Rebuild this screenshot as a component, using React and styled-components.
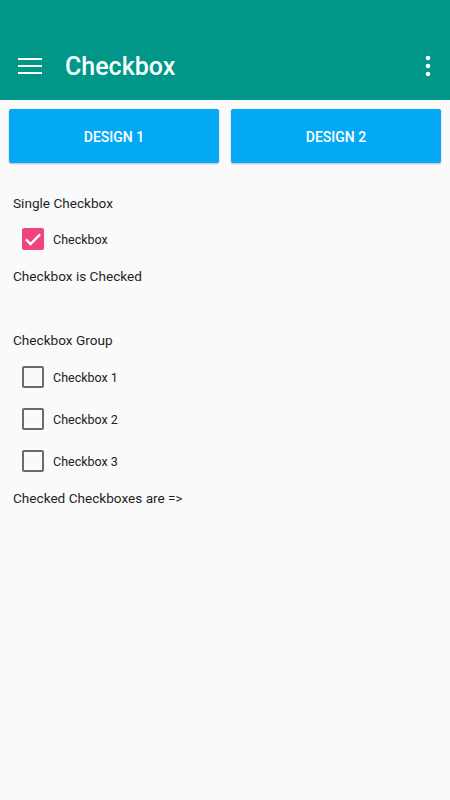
import React, { useState } from "react";
import styled, { createGlobalStyle } from "styled-components";

const Global = createGlobalStyle`
  html, body { margin: 0; padding: 0; background: #fafafa; }
  body { font-family: Roboto, "Noto Sans", Arial, sans-serif; }
  * { box-sizing: border-box; }
`;

const Page = styled.div`
  width: 450px;
  min-height: 800px;
  background: #fafafa;
`;

const AppBar = styled.header`
  height: 100px;
  background: #009688;
  padding-top: 31px;
`;

const Toolbar = styled.div`
  height: 70px;
  display: flex;
  align-items: center;
  padding: 0 18px;
  color: #fff;
`;

const Title = styled.h1`
  margin: 0 0 0 23px;
  flex: 1;
  font-size: 25px;
  font-weight: 500;
  color: #f4fffd;
  letter-spacing: 0;
`;

const IconButton = styled.button`
  background: none;
  border: 0;
  padding: 0;
  display: flex;
  align-items: center;
  justify-content: center;
  color: #fff;
  cursor: pointer;
`;

const ButtonRow = styled.div`
  display: grid;
  grid-template-columns: 1fr 1fr;
  gap: 12px;
  padding: 9px 9px 0;
`;

const RaisedButton = styled.button`
  height: 54px;
  border: 0;
  border-radius: 2px;
  background: #03a9f4;
  color: #fff;
  font-family: Roboto, Arial, sans-serif;
  font-size: 14px;
  font-weight: 500;
  letter-spacing: 0;
  padding-top: 2px;
  box-shadow: 0 1px 2px rgba(0, 0, 0, 0.25);
  cursor: pointer;
`;

const Content = styled.main`
  padding: 0 13px;
  display: flex;
  flex-direction: column;
`;

const Text = styled.div`
  height: 20px;
  line-height: 20px;
  font-size: 13.6px;
  color: #1f1f1f;
  margin-top: ${(p) => p.$top || 0}px;
`;

const Row = styled.label`
  height: 42px;
  display: flex;
  align-items: center;
  padding-left: 9px;
  gap: 9px;
  margin-top: ${(p) => p.$top || 0}px;
  cursor: pointer;
`;

const Box = styled.span`
  width: 22px;
  height: 22px;
  border-radius: 2px;
  display: flex;
  align-items: center;
  justify-content: center;
  background: ${(p) => (p.$checked ? "#f04480" : "transparent")};
  border: ${(p) => (p.$checked ? "none" : "2px solid #6b6b6b")};
`;

const Label = styled.span`
  font-size: 12.5px;
  color: #222;
`;

function Checkbox({ checked, onChange, label, top }) {
  return (
    <Row $top={top} onClick={onChange}>
      <Box $checked={checked}>
        {checked && (
          <svg width="20" height="20" viewBox="0 0 24 24">
            <path d="M3.5 12.5l5.5 5.5L20.5 6.5" fill="none" stroke="#fff" strokeWidth="2.8" />
          </svg>
        )}
      </Box>
      <Label>{label}</Label>
    </Row>
  );
}

export default function App() {
  const [single, setSingle] = useState(true);
  const [group, setGroup] = useState([false, false, false]);
  const toggle = (i) => setGroup((g) => g.map((v, j) => (j === i ? !v : v)));
  const checkedList = group
    .map((v, i) => (v ? `Checkbox ${i + 1}` : null))
    .filter(Boolean)
    .join(", ");

  return (
    <Page>
      <Global />
      <AppBar>
        <Toolbar>
          <IconButton aria-label="menu">
            <svg width="24" height="18" viewBox="0 0 24 18">
              <rect x="0" y="1" width="24" height="2" fill="#fff" />
              <rect x="0" y="8" width="24" height="2" fill="#fff" />
              <rect x="0" y="15" width="24" height="2" fill="#fff" />
            </svg>
          </IconButton>
          <Title>Checkbox</Title>
          <IconButton aria-label="more">
            <svg width="8" height="22" viewBox="0 0 8 22">
              <circle cx="4" cy="3" r="2.3" fill="#fff" />
              <circle cx="4" cy="11" r="2.3" fill="#fff" />
              <circle cx="4" cy="19" r="2.3" fill="#fff" />
            </svg>
          </IconButton>
        </Toolbar>
      </AppBar>
      <ButtonRow>
        <RaisedButton>DESIGN 1</RaisedButton>
        <RaisedButton>DESIGN 2</RaisedButton>
      </ButtonRow>
      <Content>
        <Text $top={30}>Single Checkbox</Text>
        <Checkbox top={5} checked={single} onChange={() => setSingle(!single)} label="Checkbox" />
        <Text $top={6}>{single ? "Checkbox is Checked" : "Checkbox is Unchecked"}</Text>
        <Text $top={44}>Checkbox Group</Text>
        <Checkbox top={6} checked={group[0]} onChange={() => toggle(0)} label="Checkbox 1" />
        <Checkbox checked={group[1]} onChange={() => toggle(1)} label="Checkbox 2" />
        <Checkbox checked={group[2]} onChange={() => toggle(2)} label="Checkbox 3" />
        <Text $top={6}>Checked Checkboxes are =&gt; {checkedList}</Text>
      </Content>
    </Page>
  );
}
